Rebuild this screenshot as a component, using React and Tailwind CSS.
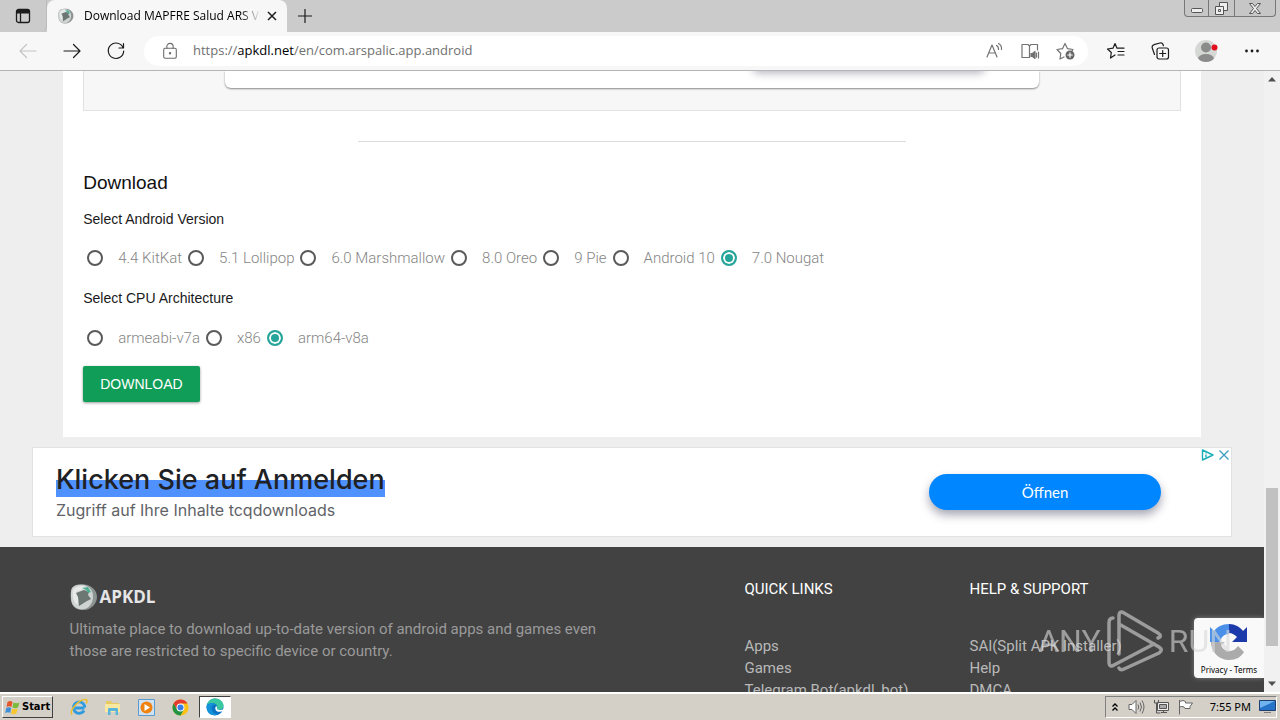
import React, { useState } from 'react';

const androidVersions = ['4.4 KitKat', '5.1 Lollipop', '6.0 Marshmallow', '8.0 Oreo', '9 Pie', 'Android 10', '7.0 Nougat'];
const architectures = ['armeabi-v7a', 'x86', 'arm64-v8a'];

const quickLinks = ['Apps', 'Games', 'Telegram Bot(apkdl_bot)'];
const helpLinks = ['SAI(Split APK Installer)', 'Help', 'DMCA'];

function SiteLogo({ className }) {
    return (
        <svg viewBox="0 0 28 28" className={className} aria-hidden="true">
            <path d="M2 5C4 1.500 9 .5 15 1.500c7 1 12 6 12 12.500S21 27 14 27C6 27 2 24 1 17 .5 12 .5 8 2 5z" fill="#8d9592" />
            <path d="M2 5C4 2 9 1 14 2c6 1.500 9 6 9 11.500C23 20 19 26 12 26.500 6 26 2 23 1.200 17 .7 12 .7 8 2 5z" fill="#cfd3d1" />
            <path d="M3 7C6 3 12 2 16 4l3 4-4-2-9 3 4 6-3 7C3 18 2 12 3 7z" fill="#e6e9e8" />
            <path d="M6 10l8-3 5 2-1 3 3 4-4 2-8 5-1-9z" fill="#6c7673" />
            <path d="M12 5l6-1 3 5-3 1-2-3z" fill="#4fae93" />
        </svg>
    );
}

function Stroke({ size = 20, color = '#1b1b1b', children }) {
    return (
        <svg width={size} height={size} viewBox="0 0 20 20" fill="none" stroke={color} strokeWidth="1.2" strokeLinecap="round" strokeLinejoin="round" aria-hidden="true">
            {children}
        </svg>
    );
}

function TabBar() {
    return (
        <div className="flex h-8 shrink-0 items-start justify-between bg-[#cbcbcb]">
            <div className="flex h-8">
                <button aria-label="Tab actions" className="flex w-[47px] items-center justify-center rounded-br-md border-r border-[#bbbbbb]">
                    <svg width="16" height="16" viewBox="0 0 16 16" fill="none" stroke="#1b1b1b" strokeWidth="1.300">
                        <rect x="1.500" y="1.500" width="13" height="13" rx="2" />
                        <path d="M1.500 3h13M1.500 4.500h13" strokeWidth="2" />
                        <path d="M5.500 5v9" />
                    </svg>
                </button>
                <div className="flex w-60 items-center rounded-t-lg bg-[#f7f7f7] pl-[11px] pr-2">
                    <SiteLogo className="size-4 shrink-0" />
                    <span className="ml-2.5 whitespace-nowrap font-['Open_Sans',sans-serif] text-xs text-black [mask-image:linear-gradient(to_right,black_86%,transparent_97%)]">
                        Download MAPFRE Salud ARS Ve
                    </span>
                    <button aria-label="Close tab" className="ml-auto mr-0.5">
                        <svg width="10" height="10" viewBox="0 0 10 10" stroke="#1b1b1b" strokeWidth="1.500">
                            <path d="M1 1l8 8M9 1L1 9" />
                        </svg>
                    </button>
                </div>
                <button aria-label="New tab" className="flex w-9 items-center justify-center">
                    <svg width="14" height="14" viewBox="0 0 14 14" stroke="#1b1b1b" strokeWidth="1.200">
                        <path d="M7 0v14M0 7h14" />
                    </svg>
                </button>
            </div>
            <div className="mr-1 flex h-[17px] rounded-b border border-t-0 border-[#777777] bg-[#c6c6c6]">
                <button aria-label="Minimize" className="flex w-6 items-center justify-center border-r border-[#777777]">
                    <svg width="12" height="12" viewBox="0 0 12 12" fill="#eeeeee" stroke="#555555">
                        <rect x=".5" y="6.500" width="11" height="4" rx="1" />
                    </svg>
                </button>
                <button aria-label="Restore" className="flex w-[26px] items-center justify-center border-r border-[#777777]">
                    <svg width="13" height="13" viewBox="0 0 13 13" fill="#eeeeee" stroke="#555555">
                        <path d="M4.500.5h8v8h-8z" />
                        <path d="M.5 4.500h8v8h-8z" />
                        <path d="M3.500 7.500h2v2h-2z" />
                    </svg>
                </button>
                <button aria-label="Close window" className="flex w-10 items-center justify-center">
                    <svg width="12" height="11" viewBox="0 0 12 11" fill="#eeeeee" stroke="#555555">
                        <path d="M.5.5h3L6 3.500 8.500.5h3l-4 5 4 5h-3L6 7.500l-2.500 3h-3l4-5z" />
                    </svg>
                </button>
            </div>
        </div>
    );
}

function Toolbar() {
    return (
        <div className="flex h-[39px] shrink-0 items-center border-b border-[#b5b5b5] bg-[#f7f7f7] pl-[18px] pr-[18px]">
            <button aria-label="Back"><Stroke color="#c4c4c4"><path d="M18 10H2M8.500 3.500L2 10l6.500 6.500" /></Stroke></button>
            <button aria-label="Forward" className="ml-6"><Stroke><path d="M2 10h16M11.500 3.500L18 10l-6.500 6.500" /></Stroke></button>
            <button aria-label="Refresh" className="ml-6">
                <Stroke><path d="M17.200 7A7.700 7.700 0 1 0 17.700 10M17.500 2.500V7H13" /></Stroke>
            </button>
            <div className="ml-[18px] flex h-[30px] flex-1 items-center rounded-full bg-white pl-[17px] pr-3">
                <Stroke size={18} color="#6b6b6b">
                    <rect x="3" y="7" width="14" height="11" rx="1.500" />
                    <path d="M6.500 7V5a3.500 3.500 0 0 1 7 0v2" />
                    <circle cx="10" cy="12.500" r=".7" fill="#6b6b6b" />
                </Stroke>
                <span className="ml-3.5 flex-1 font-['Open_Sans',sans-serif] text-[13px] text-[#707070]">
                    https://<span className="text-black">apkdl.net</span>/en/com.arspalic.app.android
                </span>
                <div className="flex items-center gap-4">
                    <button aria-label="Read aloud">
                        <Stroke color="#737373"><path d="M3 16L8 4l5 12M5 12h6.500M12.500 4.500a4 4 0 0 1 2 4M14.500 2.500a6 6 0 0 1 3 6" /></Stroke>
                    </button>
                    <button aria-label="Immersive reader">
                        <Stroke color="#737373">
                            <path d="M9.500 16.500H2v-13h6l1.500 1.500L11 3.500h6.500V9M9.500 5v11.500" />
                            <path d="M11 12.500h1.500l2.500-2v7l-2.500-2H11z" fill="#737373" />
                            <path d="M16.500 12v4M18.500 11v6" />
                        </Stroke>
                    </button>
                    <button aria-label="Add to favorites">
                        <Stroke color="#737373">
                            <path d="M8 16l-4 2 .8-5.500L1 8.500 6.500 7.700 9 2.500l2.500 5.200 5.500.8-1 1.500" />
                            <circle cx="14" cy="14" r="4.500" fill="#666666" stroke="none" />
                            <path d="M14 11.800v4.400M11.800 14h4.400" stroke="#ffffff" />
                        </Stroke>
                    </button>
                </div>
            </div>
            <div className="ml-[18px] flex items-center gap-6">
                <button aria-label="Favorites">
                    <Stroke>
                        <path d="M9 14l-4.500 3 .8-5.500L1.500 8 7 7.200 9 2.500l2 4.700h7M12 10.500h6M12 14h6" />
                    </Stroke>
                </button>
                <button aria-label="Collections">
                    <Stroke>
                        <rect x="7" y="7" width="11.500" height="11" rx="2" />
                        <path d="M12.700 9.500v6M9.700 12.500h6M4.500 13.500L2.200 6.700C1.800 5 2.500 4.200 4 3.700l6-1.700c1.500-.4 2.400 0 3 1.500l.4 1.200" />
                    </Stroke>
                </button>
                <button aria-label="Profile">
                    <svg width="24" height="24" viewBox="0 0 24 24">
                        <clipPath id="avatar"><circle cx="12" cy="12" r="11" /></clipPath>
                        <g clipPath="url(#avatar)">
                            <path d="M0 0h24v24H0z" fill="#d5d8d5" />
                            <circle cx="12" cy="8.500" r="5" fill="#8b8b8b" />
                            <ellipse cx="12" cy="20" rx="8" ry="5" fill="#8b8b8b" />
                        </g>
                        <circle cx="20.500" cy="8.500" r="3" fill="#e0101f" />
                    </svg>
                </button>
                <button aria-label="Settings and more">
                    <svg width="20" height="20" viewBox="0 0 20 20" fill="#1b1b1b">
                        <circle cx="4.500" cy="10" r="1.400" /><circle cx="10" cy="10" r="1.400" /><circle cx="15.500" cy="10" r="1.400" />
                    </svg>
                </button>
            </div>
        </div>
    );
}

function RadioRow({ name, options, value, onChange }) {
    return (
        <div className="flex flex-wrap gap-x-0.5 pl-1 font-[Roboto,sans-serif] text-[15px] font-light leading-6 text-[#858585]">
            {options.map((option) => (
                <label key={option} className="flex items-center pr-1">
                    <input
                        type="radio"
                        name={name}
                        checked={value === option}
                        onChange={() => onChange(option)}
                        className="mr-[15px] size-4 appearance-none rounded-full border-2 border-[#5a5a5a] checked:border-[#26a69a] checked:bg-[#26a69a] checked:shadow-[inset_0_0_0_2px_white]"
                    />
                    {option}
                </label>
            ))}
        </div>
    );
}

function DownloadCard() {
    const [version, setVersion] = useState('7.0 Nougat');
    const [arch, setArch] = useState('arm64-v8a');

    return (
        <main className="mx-auto w-[90%] bg-white px-5 pb-[35px] font-['Liberation_Sans',Arial,sans-serif]">
            <div className="h-10 border border-t-0 border-[#e2e2e2] bg-[#f7f7f7]">
                <div className="mx-auto h-[17px] w-[74.3%] overflow-hidden rounded-b-md bg-white shadow-[0_1px_2px_rgba(0,0,0,0.45)]">
                    <div className="-mt-2 ml-auto mr-[56px] h-2 w-[28%] rounded-full shadow-[0_0_8px_2px_rgba(60,60,90,0.4)]" />
                </div>
            </div>
            <hr className="mx-auto mt-[30px] w-1/2 border-[#dddddd]" />
            <h2 className="mt-[29px] text-[19px] leading-6 text-[#111111]">Download</h2>
            <p className="mt-3 text-sm leading-6 text-[#1a1a1a]">Select Android Version</p>
            <div className="mt-[15px]">
                <RadioRow name="version" options={androidVersions} value={version} onChange={setVersion} />
            </div>
            <p className="mt-4 text-sm leading-6 text-[#1a1a1a]">Select CPU Architecture</p>
            <div className="mt-4">
                <RadioRow name="arch" options={architectures} value={arch} onChange={setArch} />
            </div>
            <button className="mt-4 h-9 rounded-xs bg-[#0f9d58] px-[17px] text-sm text-white shadow-[0_1px_3px_rgba(0,0,0,0.4)]">DOWNLOAD</button>
        </main>
    );
}

function AdBanner() {
    return (
        <aside className="relative mx-auto my-2.5 flex h-[90px] max-w-[1200px] items-center justify-between border border-[#e2e2e2] bg-white pl-[23px] pr-[70px] font-[Inter,sans-serif]">
            <div className="pt-0.5">
                <h3 className="w-fit bg-[linear-gradient(transparent_50%,#4f91ff_50%)] text-[27px] font-medium leading-[34px] text-[#202124]">Klicken Sie auf Anmelden</h3>
                <p className="text-base leading-[26px] text-[#5f6368]">Zugriff auf Ihre Inhalte tcqdownloads</p>
            </div>
            <button className="h-9 w-58 rounded-full bg-[#0086ff] font-[Lato,sans-serif] text-[15px] text-white shadow-[0_5px_10px_rgba(60,60,90,0.45)]">Öffnen</button>
            <div className="absolute right-px top-px flex gap-1">
                <button aria-label="Ad info">
                    <svg width="13" height="12" viewBox="0 0 13 12" fill="none" stroke="#1aafb8" strokeWidth="1.400" strokeLinejoin="round">
                        <path d="M1.500 1l10.500 5-10.500 5z" /><path d="M5 5.500v3M5 3.500v1" />
                    </svg>
                </button>
                <button aria-label="Close ad">
                    <svg width="12" height="12" viewBox="0 0 12 12" stroke="#3f9fc0" strokeWidth="1.400"><path d="M1.500 1.500l9 9M10.500 1.500l-9 9" /></svg>
                </button>
            </div>
        </aside>
    );
}

function FooterLinks({ title, links }) {
    return (
        <nav>
            <h4 className="mb-[35px] leading-[22px] text-white">{title}</h4>
            {links.map((link) => (
                <a key={link} href="#" className="block whitespace-nowrap leading-[22px]">{link}</a>
            ))}
        </nav>
    );
}

function Footer() {
    return (
        <footer className="bg-[#424242] pt-[31px] font-[Roboto,sans-serif] text-[15px] text-[#b9b9b9]">
            <div className="mx-auto grid w-[89%] grid-cols-5">
                <div className="col-span-3 pt-[5px]">
                    <div className="mb-[7px] flex items-center gap-0.5 font-['Open_Sans',sans-serif] text-[17px] font-bold leading-7 text-[#e6e6e6]">
                        <SiteLogo className="size-7" />
                        APKDL
                    </div>
                    <p className="max-w-[540px] leading-[22px] text-[#9a9a9a]">
                        Ultimate place to download up-to-date version of android apps and games even those are restricted to specific device or country.
                    </p>
                </div>
                <FooterLinks title="QUICK LINKS" links={quickLinks} />
                <FooterLinks title="HELP & SUPPORT" links={helpLinks} />
            </div>
        </footer>
    );
}

function RecaptchaBadge() {
    return (
        <div className="absolute bottom-3.5 right-0 flex h-[60px] w-[70px] flex-col items-center justify-between rounded-l bg-[#f9f9f9] pb-0.5 pt-1 shadow-[0_0_5px_gray]">
            <svg width="40" height="40" viewBox="0 0 40 40" aria-hidden="true">
                <path d="M20 2C13 2 8 5 5 9L1 5v15h10c1-5 4-8 9-8z" fill="#4a90e8" />
                <path d="M20 2c6 0 11 3 14 7l4-4v15H23l5-5c-2-2-5-4-8-4z" fill="#1c3aa9" />
                <path d="M2 20c0 10 8 18 18 18 7 0 12-3 15-8l-6-6c-2 3-5 5-9 5s-7-3-8-6l4-3z" fill="#ababab" />
            </svg>
            <div className="flex gap-0.5 font-['Noto_Sans',sans-serif] text-[8px] leading-3 text-black">
                <a href="#">Privacy</a>-<a href="#">Terms</a>
            </div>
        </div>
    );
}

function Watermark() {
    return (
        <div className="pointer-events-none absolute bottom-5 right-8 flex items-center gap-1.5 font-[Roboto,sans-serif] text-[32px] leading-[62px] text-[#d8d8d8] opacity-60">
            ANY
            <svg width="56" height="62" viewBox="0 0 56 62" fill="none" stroke="#d8d8d8" strokeWidth="3.500" strokeLinejoin="round" strokeLinecap="round" aria-hidden="true">
                <path d="M6 8c-3 0-4 2-4 5v39c0 4 2 5 5 3l40-21" />
                <path d="M12 14v30M12 14V6c0-4 2-5 5-3l34 20c3 2 3 4 0 5M12 14l40 23c3 2 3 4 0 6L17 59c-2 1-4 1-5-1" />
            </svg>
            RUN
        </div>
    );
}

function ScrollBar() {
    return (
        <div className="flex w-4 shrink-0 flex-col items-center justify-between bg-[#f1f1f1] py-1.5">
            <svg width="8" height="5" viewBox="0 0 8 5" fill="#505050"><path d="M4 0l4 4.500H0z" /></svg>
            <div className="flex flex-1 flex-col justify-end pb-[35px]">
                <div className="h-[158px] w-3 bg-[#c1c1c1]" />
            </div>
            <svg width="8" height="5" viewBox="0 0 8 5" fill="#505050"><path d="M4 5L0 .5h8z" /></svg>
        </div>
    );
}

function EdgeIcon() {
    return (
        <svg width="18" height="18" viewBox="0 0 18 18">
            <circle cx="9" cy="9" r="8.500" fill="#0c73c4" />
            <path d="M1 7C2 3 5 .5 9 .5c5 0 8.500 3.500 8.500 7 0 3-2 4.500-4.500 4.500-1.500 0-2.500-.7-2-1.500C12.500 7 8 4 4 5.500 2.500 6 1.500 6.500 1 7z" fill="#3ac8a0" />
            <path d="M1 7c2-2.500 7-3 9 0-3-1-5 1-4.500 4 .5 3 3 5 6 5.500C6 19 .5 15 .5 9z" fill="#1492d9" />
            <path d="M10.500 8c-2 1-1.500 5 1.500 5.700 2 .4 4-.2 5.500-1.200v-1.500c-2 1.500-7 1.500-6.500-1z" fill="#ffffff" />
        </svg>
    );
}

function Taskbar() {
    return (
        <div className="flex h-7 shrink-0 items-center justify-between border-t-2 border-white bg-[#d4d0c8] pl-0.5 pr-[3px]">
            <div className="flex items-center">
                <button className="mr-[17px] flex h-[22px] items-center gap-0.5 border border-b-[#404040] border-l-white border-r-[#404040] border-t-white px-0.5 font-['DejaVu_Sans_Condensed','DejaVu_Sans',sans-serif] text-[11px] font-bold text-black">
                    <svg width="15" height="15" viewBox="0 0 15 15" aria-hidden="true">
                        <path d="M2.500 2q3-2 5 0l-1 5q-2-1.500-5 0z" fill="#e5562a" />
                        <path d="M8.500 2.500q3 1.500 6 0l-1.500 5q-3 1.500-5.500 0z" fill="#7cba3c" />
                        <path d="M1.200 8q3-1.500 5 0l-1 5q-2-1.500-5 0z" fill="#3f8fd8" />
                        <path d="M7.200 8.500q2.500 1.500 5.500 0l-1.300 5q-3 1.500-5.400 0z" fill="#f7c52d" />
                    </svg>
                    Start
                </button>
                <button aria-label="Internet Explorer" className="flex w-[34px] justify-start">
                    <svg width="18" height="18" viewBox="0 0 18 18" fill="none">
                        <path d="M14.500 10H5M14 12.500a5.700 5.700 0 1 1 .8-3" stroke="#2f9be0" strokeWidth="2.800" />
                        <path d="M2 16.500C-1 13 8 1.500 15.500 1.500c2.500 0 1.500 3 .5 4" stroke="#edbd2e" strokeWidth="1.500" />
                    </svg>
                </button>
                <button aria-label="Windows Explorer" className="flex w-[34px] justify-start">
                    <svg width="18" height="18" viewBox="0 0 18 18">
                        <path d="M2 3h5l1 2h7v9H2z" fill="#e8c860" /><path d="M1 6h15v8H1z" fill="#f8e8a0" />
                        <path d="M4 17v-6q0-1 1-1h8q1 0 1 1v6h-2.500v-4h-5v4z" fill="#5ab4dc" />
                    </svg>
                </button>
                <button aria-label="Media Player" className="flex w-[34px] justify-start">
                    <svg width="17" height="17" viewBox="0 0 17 17">
                        <path d="M.5.5h16v16H.5z" fill="#d0e2f2" stroke="#5c9bd0" />
                        <circle cx="8.500" cy="8.500" r="6" fill="#ef8210" /><path d="M6.500 5l5.500 3.500L6.500 12z" fill="#ffffff" />
                    </svg>
                </button>
                <button aria-label="Chrome" className="flex w-[27px] justify-start">
                    <svg width="17" height="17" viewBox="0 0 18 18">
                        <circle cx="9" cy="9" r="8.500" fill="#fbc116" />
                        <path d="M1.600 4.800A8.500 8.500 0 0 1 16.400 4.800H9l-4 6z" fill="#e33b2e" />
                        <path d="M1.600 4.800A8.500 8.500 0 0 0 9 17.500l3.700-6.400L5.300 11z" fill="#229342" />
                        <circle cx="9" cy="9" r="4.200" fill="#ffffff" /><circle cx="9" cy="9" r="3.200" fill="#3a7ce8" />
                    </svg>
                </button>
                <button aria-label="Edge" className="flex h-[22px] w-8 items-center justify-center border border-b-white border-l-[#404040] border-r-white border-t-[#404040] bg-white">
                    <EdgeIcon />
                </button>
            </div>
            <div className="flex h-[22px] items-center border border-b-white border-l-[#808080] border-r-white border-t-[#808080] pl-1.5 font-['Noto_Sans',sans-serif] text-[11px] text-black">
                <svg width="6" height="9" viewBox="0 0 6 9" fill="none" stroke="#000000" strokeWidth="1.300"><path d="M.5 3.500L3 1l2.500 2.500M.5 7.500L3 5l2.500 2.500" /></svg>
                <svg className="ml-2.5" width="17" height="16" viewBox="0 0 17 16" fill="#ffffff" stroke="#666666">
                    <path d="M1 5.500h3l4-4v13l-4-4H1z" /><path d="M10 5.500q1.500 2.500 0 5M12 3.500q3 4.500 0 9M14 1.500q4 6.500 0 13" fill="none" />
                </svg>
                <svg className="ml-2" width="16" height="16" viewBox="0 0 16 16" fill="#eeeeee" stroke="#555555">
                    <path d="M4.500 3.500h11v8h-11z" /><path d="M6.500 5.500h7v4h-7z" fill="#aaaaaa" /><path d="M8 13.500h6M10.500 12v2" />
                    <path d="M1.500 1v3h4V1M3.500 4v10h4" fill="none" />
                </svg>
                <svg className="ml-2" width="17" height="16" viewBox="0 0 17 16" fill="#ffffff" stroke="#666666">
                    <path d="M2.500 1v14.500M2.500 2.500q4-2 6 0v1.500h7l-2.500 3.500 0 2-5 0-1-1.500q-2-1-4.500 0z" />
                </svg>
                <span className="ml-4 leading-5">7:55 PM</span>
                <svg className="ml-2" width="17" height="14" viewBox="0 0 17 14">
                    <path d="M.5.5h16v10H.5z" fill="#2673c9" stroke="#1d3f72" /><path d="M1 1h15L1 8z" fill="#70b3ee" /><path d="M5 12.500h7" stroke="#808080" />
                </svg>
            </div>
        </div>
    );
}

export default function App() {
    return (
        <div className="relative flex h-screen flex-col overflow-hidden bg-[#eeeeee]">
            <TabBar />
            <Toolbar />
            <div className="flex min-h-0 flex-1">
                <div className="relative flex-1 overflow-hidden">
                    <DownloadCard />
                    <AdBanner />
                    <Footer />
                    <RecaptchaBadge />
                    <Watermark />
                </div>
                <ScrollBar />
            </div>
            <Taskbar />
        </div>
    );
}
